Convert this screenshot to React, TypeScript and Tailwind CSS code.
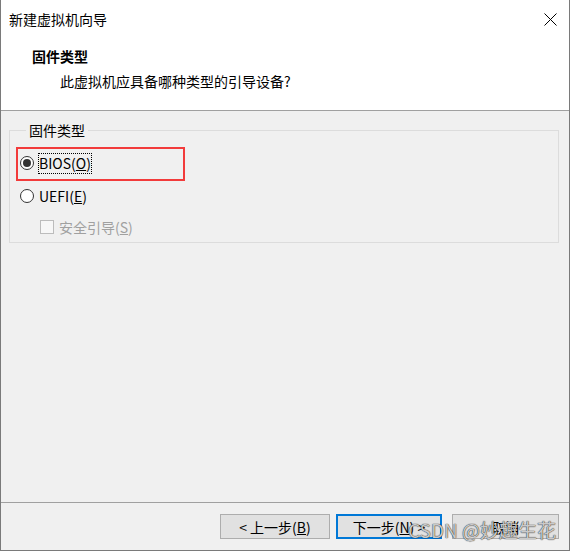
export default function App() {
  return (
    <div className="relative w-[570px] h-[551px] bg-[#f0f0f0] border-l border-r border-b border-[#7a7a7a] font-['Noto_Sans_CJK_SC',sans-serif] text-[14px] text-black flex flex-col overflow-hidden">
      <div className="h-[111px] bg-white border-b border-[#a0a0a0] shrink-0">
        <div className="h-[38px] flex items-center justify-between pl-[8px] pr-[12px]">
          <span className="leading-[20px]">新建虚拟机向导</span>
          <svg width="13" height="13" viewBox="0 0 13 13">
            <path d="M0.5 0.5L12.5 12.5M12.5 0.5L0.5 12.5" stroke="#000" strokeWidth="1" />
          </svg>
        </div>
        <div className="pl-[31px] mt-[8px] font-bold leading-[20px]">固件类型</div>
        <div className="pl-[59px] mt-[5px] leading-[20px]">此虚拟机应具备哪种类型的引导设备?</div>
      </div>

      <div className="flex-1 pt-[11px]">
        <fieldset className="ml-[8px] mr-[10px] border border-[#dcdcdc] pl-[10px] pb-[3px]">
          <legend className="ml-[6px] px-[3px] leading-[16px]">固件类型</legend>
          <div className="h-[24px] mt-[13px] flex items-center">
            <span className="w-[14px] h-[14px] rounded-full border border-[#333] bg-white flex items-center justify-center">
              <span className="w-[8px] h-[8px] rounded-full bg-[#333]" />
            </span>
            <span className="ml-[4px] border border-dotted border-black leading-[19px]">
              BIOS(<u>O</u>)
            </span>
          </div>
          <div className="h-[24px] mt-[9px] flex items-center">
            <span className="w-[14px] h-[14px] rounded-full border border-[#333] bg-white" />
            <span className="ml-[5px] leading-[19px]">
              UEFI(<u>E</u>)
            </span>
          </div>
          <div className="h-[24px] mt-[7px] flex items-center pl-[20px] text-[#a0a0a0]">
            <span className="w-[14px] h-[14px] border border-[#bcbcbc] bg-[#f7f7f7]" />
            <span className="ml-[5px] leading-[19px]">
              安全引导(<u>S</u>)
            </span>
          </div>
        </fieldset>
      </div>

      <div className="h-[48px] shrink-0 border-t border-[#a0a0a0] flex items-start justify-end pt-[11px] pr-[10px]">
        <button className="h-[25px] w-[110px] border border-[#adadad] bg-[#e1e1e1] leading-[20px]">
          &lt; 上一步(<u>B</u>)
        </button>
        <button className="ml-[6px] h-[25px] w-[106px] border-2 border-[#0078d7] bg-[#e1e1e1] leading-[20px]">
          下一步(<u>N</u>) &gt;
        </button>
        <button className="ml-[10px] h-[25px] w-[107px] border border-[#adadad] bg-[#e1e1e1] leading-[20px]">
          取消
        </button>
      </div>

      <div className="absolute left-[407px] top-[518px] text-[19px] leading-[24px] text-[rgba(235,235,235,0.85)] [text-shadow:0_0_1px_rgba(0,0,0,0.9),0_0_1px_rgba(0,0,0,0.6)] pointer-events-none whitespace-nowrap">
        CSDN @妙趣生花
      </div>
      <div className="absolute left-[15px] top-[147px] w-[169px] h-[34px] border-2 border-[#f23b3b] pointer-events-none" />
    </div>
  );
}
